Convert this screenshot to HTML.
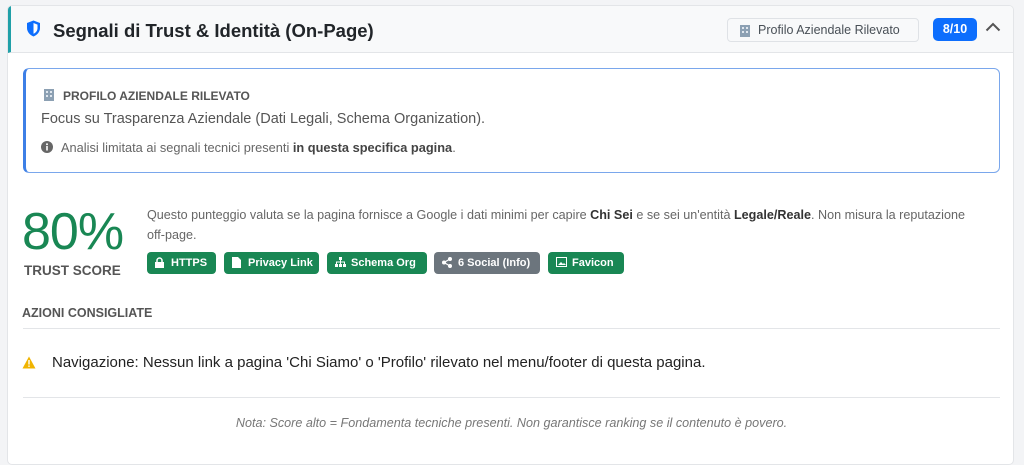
<!DOCTYPE html>
<html><head><meta charset="utf-8"><style>
*{box-sizing:border-box;margin:0;padding:0}
body{width:1024px;height:442px;overflow:hidden;background:#f3f4f6;font-family:"Liberation Sans",sans-serif;color:#212529}
.card{position:absolute;left:7px;top:5px;width:1007px;height:460px;background:#fff;border:1px solid #e3e5e8;border-radius:5px;overflow:hidden}
.hdr{position:absolute;left:0;top:0;right:0;height:47px;background:#f8f9fa;border-bottom:1px solid #e3e5e8;border-left:3px solid #20a0a8}
.title{position:absolute;left:42px;top:14px;font-size:18.5px;font-weight:bold;color:#212529}
.pill{position:absolute;left:716px;top:12px;width:192px;height:24px;border:1px solid #dfe2e6;border-radius:4px;background:#f8f9fa;font-size:12.5px;color:#495057;padding:4px 0 0 30px}
.num{position:absolute;left:922px;top:12px;width:44px;height:23px;background:#0d6efd;color:#fff;border-radius:5px;font-size:12.5px;font-weight:bold;text-align:center;line-height:23px}
.info{position:absolute;left:15px;top:62px;width:977px;height:105px;border:1px solid #7aa7ec;border-left:3px solid #3d7fe6;border-radius:6px}
.t{position:absolute;white-space:nowrap}
.badge{position:absolute;top:246px;height:22px;border-radius:4px;background:#198754;color:#fff;font-size:11px;font-weight:bold;line-height:22px;padding-left:24px}
.badge svg{position:absolute;left:8px;top:5px}
.hr{position:absolute;left:15px;width:977px;height:1px;background:#e3e5e8}
</style></head><body>
<div class="card">
<div class="hdr">
<svg style="position:absolute;left:15px;top:14px" width="15" height="17" viewBox="0 0 15 17"><path d="M7.5 0.5L14 3v5c0 4-3 7-6.5 8.5C4 15 1 12 1 8V3z" fill="#0d6efd"/><path d="M7.5 3L11.5 4.6v3.6c0 2.5-1.8 4.5-4 5.6z" fill="#fff"/></svg>
<div class="title">Segnali di Trust &amp; Identità (On-Page)</div>
<div class="pill"><svg style="position:absolute;left:11px;top:5px" width="12" height="13"><rect x="1" y="1" width="10" height="12" fill="#8ca0b3"/><rect x="3" y="3" width="2" height="2" fill="#dfe6ee"/><rect x="7" y="3" width="2" height="2" fill="#dfe6ee"/><rect x="3" y="7" width="2" height="2" fill="#dfe6ee"/><rect x="7" y="7" width="2" height="2" fill="#dfe6ee"/></svg>Profilo Aziendale Rilevato</div>
<div class="num">8/10</div>
<svg style="position:absolute;left:974px;top:16px" width="16" height="10"><path d="M1.5 8.5L8 2l6.5 6.5" stroke="#555" stroke-width="2" fill="none"/></svg>
</div>
<div class="info"></div>
<svg style="position:absolute;left:35px;top:82px" width="12" height="13"><rect x="1" y="1" width="10" height="12" fill="#8ca0b3"/><rect x="3" y="3" width="2" height="2" fill="#dfe6ee"/><rect x="7" y="3" width="2" height="2" fill="#dfe6ee"/><rect x="3" y="7" width="2" height="2" fill="#dfe6ee"/><rect x="7" y="7" width="2" height="2" fill="#dfe6ee"/></svg>
<div class="t" style="left:55px;top:83px;font-size:12px;font-weight:bold;color:#555">PROFILO AZIENDALE RILEVATO</div>
<div class="t" style="left:33px;top:105px;font-size:14.5px;color:#555">Focus su Trasparenza Aziendale (Dati Legali, Schema Organization).</div>
<svg style="position:absolute;left:33px;top:135px" width="12" height="12"><circle cx="6" cy="6" r="6" fill="#666"/><rect x="5.2" y="5" width="1.6" height="4.5" fill="#fff"/><circle cx="6" cy="3.3" r="1" fill="#fff"/></svg>
<div class="t" style="left:53px;top:134px;font-size:12.8px;color:#666">Analisi limitata ai segnali tecnici presenti <b style="color:#444">in questa specifica pagina</b>.</div>
<div class="t" style="left:14px;top:196px;font-size:52px;color:#198754;letter-spacing:-1px">80%</div>
<div class="t" style="left:16px;top:257px;font-size:13.5px;font-weight:bold;color:#555">TRUST SCORE</div>
<div class="t" style="left:139px;top:199px;font-size:12.6px;color:#666;line-height:20px;white-space:normal;width:860px">Questo punteggio valuta se la pagina fornisce a Google i dati minimi per capire <b style="color:#333">Chi Sei</b> e se sei un'entità <b style="color:#333">Legale/Reale</b>. Non misura la reputazione off&#8209;page.</div>
<div class="badge" style="left:139px;width:69px"><svg width="9" height="11"><rect x="0" y="5" width="9" height="6" fill="#fff"/><path d="M2 5V3.5a2.5 2.5 0 0 1 5 0V5" stroke="#fff" stroke-width="1.5" fill="none"/></svg>HTTPS</div>
<div class="badge" style="left:216px;width:95px"><svg width="9" height="11"><path d="M0 0h6l3 3v8H0z" fill="#fff"/></svg>Privacy Link</div>
<div class="badge" style="left:319px;width:100px"><svg width="11" height="11"><rect x="4" y="0" width="3" height="3" fill="#fff"/><rect x="0" y="7" width="3" height="3" fill="#fff"/><rect x="4" y="7" width="3" height="3" fill="#fff"/><rect x="8" y="7" width="3" height="3" fill="#fff"/><path d="M5.5 3v4M1.5 7V5h8v2" stroke="#fff" fill="none"/></svg>Schema Org</div>
<div class="badge" style="left:426px;width:106px;background:#6c757d"><svg width="10" height="11"><circle cx="8" cy="2" r="2" fill="#fff"/><circle cx="2" cy="5.5" r="2" fill="#fff"/><circle cx="8" cy="9" r="2" fill="#fff"/><path d="M8 2L2 5.5 8 9" stroke="#fff" stroke-width="1.2" fill="none"/></svg>6 Social (Info)</div>
<div class="badge" style="left:540px;width:76px"><svg width="11" height="10"><rect x="0.5" y="0.5" width="10" height="9" fill="none" stroke="#fff"/><path d="M2 8l3-3 2 2 1-1 2 2z" fill="#fff"/></svg>Favicon</div>
<div class="t" style="left:14px;top:300px;font-size:12.5px;font-weight:bold;color:#555">AZIONI CONSIGLIATE</div>
<div class="hr" style="top:322px"></div>
<svg style="position:absolute;left:14px;top:350px" width="14" height="13"><path d="M7 0.5L13.5 12.5H0.5z" fill="#f0b400"/><rect x="6.3" y="4" width="1.4" height="4.5" fill="#fff"/><rect x="6.3" y="9.5" width="1.4" height="1.4" fill="#fff"/></svg>
<div class="t" style="left:44px;top:348px;font-size:15px;color:#222">Navigazione: Nessun link a pagina 'Chi Siamo' o 'Profilo' rilevato nel menu/footer di questa pagina.</div>
<div class="hr" style="top:391px"></div>
<div class="t" style="left:0;width:1007px;text-align:center;top:410px;font-size:12.6px;font-style:italic;color:#777">Nota: Score alto = Fondamenta tecniche presenti. Non garantisce ranking se il contenuto è povero.</div>
</div>
</body></html>
